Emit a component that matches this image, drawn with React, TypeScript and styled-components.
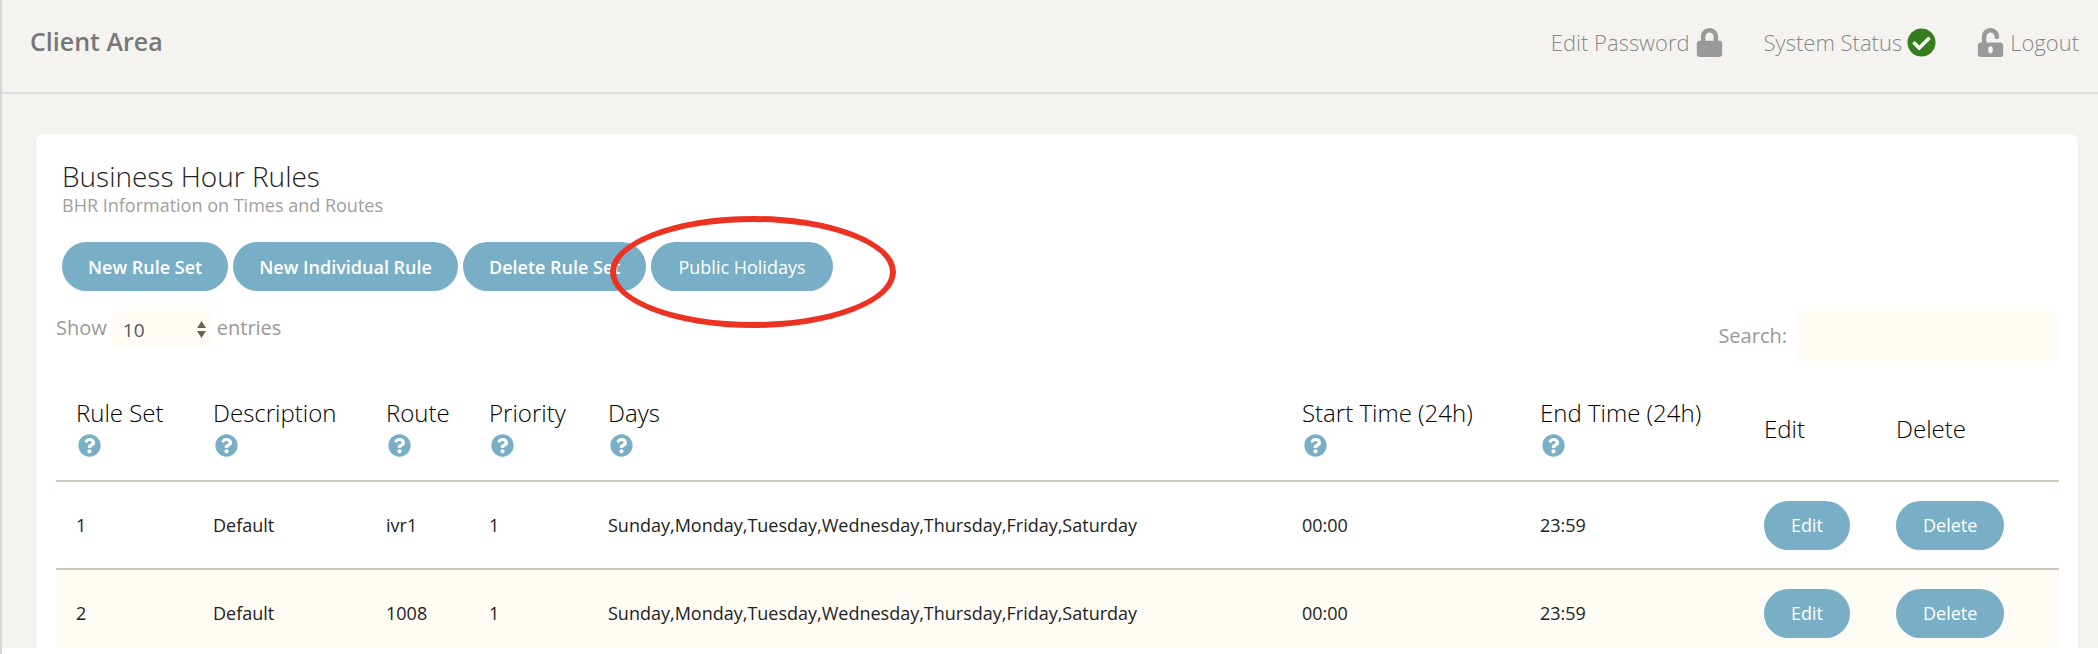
import React from 'react';
import styled, { createGlobalStyle } from 'styled-components';
import { FaCheckCircle, FaLock, FaQuestionCircle, FaUnlockAlt } from 'react-icons/fa';

const GlobalStyle = createGlobalStyle`
  * { box-sizing: border-box; }
  body {
    margin: 0;
    background: #fff;
    color: #222;
    font-family: "Open Sans", "Noto Sans", sans-serif;
    font-size: 18px;
    line-height: 24px;
  }
  button, input, select { font: inherit; }
`;

const Shell = styled.div`
  height: 100vh;
  padding-bottom: 6px;
  border-left: 2px solid #d7d7da;
`;

const Page = styled.div`
  height: 100%;
  overflow: hidden;
  background: #f4f3ef;
`;

const Header = styled.header`
  display: flex;
  align-items: flex-start;
  justify-content: space-between;
  padding: 24px 19px 32px 28px;
  border-bottom: 2px solid #dedede;
`;

const Brand = styled.h1`
  margin: 0;
  color: #777;
  font-size: 25px;
  font-weight: 600;
  line-height: 34px;
`;

const Nav = styled.nav`
  display: flex;
  gap: 40px;
`;

const NavLink = styled.a`
  display: flex;
  align-items: center;
  gap: 5px;
  color: #888;
  font-size: 22px;
  font-weight: 300;
  line-height: 36px;
  text-decoration: none;
`;

const NavIcon = styled.span<{ $color?: string }>`
  display: flex;
  color: ${({ $color }) => $color ?? '#999'};
  font-size: 29px;
`;

const Card = styled.main`
  margin: 40px 20px 0 34px;
  padding: 24px 19px 20px 20px;
  border-radius: 8px;
  background: #fff;
  box-shadow: 0 2px 3px rgba(0, 0, 0, 0.08);
`;

const Intro = styled.div`
  padding-left: 6px;
`;

const Title = styled.h2`
  margin: 0;
  font-size: 28px;
  font-weight: 300;
  line-height: 36px;
`;

const Subtitle = styled.p`
  margin: 0;
  color: #a0a0a0;
  line-height: 22px;
`;

const Actions = styled.div`
  display: flex;
  gap: 5px;
  padding-top: 26px;
`;

const Pill = styled.button<{ $bold?: boolean }>`
  height: 49px;
  padding: 0 ${({ $bold }) => ($bold ? 26 : 27)}px;
  border: 0;
  border-radius: 25px;
  background: #78afc6;
  color: #fff;
  font-size: 18px;
  font-weight: ${({ $bold }) => ($bold ? 600 : 400)};
  white-space: nowrap;
  cursor: pointer;
`;

const Highlighted = styled.div`
  position: relative;
`;

const Ring = styled.span`
  position: absolute;
  top: -26px;
  left: -41px;
  width: 286px;
  height: 112px;
  border: 6px solid #ec3223;
  border-radius: 50%;
  pointer-events: none;
`;

const Controls = styled.div`
  display: flex;
  align-items: flex-start;
  justify-content: space-between;
  padding: 19px 1px 18px 0;
  color: #999;
  font-size: 20px;
`;

const Length = styled.label`
  display: flex;
  align-items: flex-start;
  gap: 6px;
  line-height: 36px;
`;

const SelectBox = styled.span`
  display: flex;
  align-items: center;
  width: 98px;
  border-radius: 6px;
  background: #fffcf6;
`;

const Select = styled.select`
  flex: 1;
  width: 100%;
  height: 39px;
  padding: 0 10px;
  border: 0;
  background: transparent;
  color: #555;
  font-size: 19px;
  appearance: none;
`;

const Carets = styled.svg`
  width: 9px;
  height: 17px;
  margin: 0 5px 0 -14px;
  fill: #66625c;
  pointer-events: none;
`;

const Search = styled.label`
  display: flex;
  align-items: center;
  gap: 9px;
`;

const SearchInput = styled.input`
  width: 262px;
  height: 52px;
  padding: 0 12px;
  border: 0;
  border-radius: 6px;
  background: #fffcf6;
`;

const Table = styled.table`
  width: 100%;
  table-layout: fixed;
  border-collapse: collapse;
`;

const Col = styled.col<{ $width?: number }>`
  width: ${({ $width }) => ($width ? `${$width}px` : 'auto')};
`;

const HeadCell = styled.th`
  height: 101px;
  padding: 0 0 2px 20px;
  border-bottom: 2px solid #cdc7bd;
  color: #000;
  font-size: 24px;
  font-weight: 300;
  line-height: 32px;
  text-align: left;
  white-space: nowrap;
`;

const Help = styled.span`
  display: flex;
  align-items: center;
  height: 32px;
  padding-left: 2px;
  color: #78afc6;
  font-size: 23px;
`;

const Row = styled.tr`
  &:nth-child(even) { background: #fffcf6; }
`;

const Cell = styled.td`
  height: 88px;
  padding: 0 0 0 20px;
  border-bottom: 2px solid #cdc7bd;
`;

const columns = [
  { name: 'Rule Set', width: 137, help: true },
  { name: 'Description', width: 173, help: true },
  { name: 'Route', width: 103, help: true },
  { name: 'Priority', width: 119, help: true },
  { name: 'Days', help: true },
  { name: 'Start Time (24h)', width: 238, help: true },
  { name: 'End Time (24h)', width: 224, help: true },
  { name: 'Edit', width: 132 },
  { name: 'Delete', width: 183 },
];

const allDays = 'Sunday,Monday,Tuesday,Wednesday,Thursday,Friday,Saturday';

const rules = [
  ['1', 'Default', 'ivr1', '1', allDays, '00:00', '23:59'],
  ['2', 'Default', '1008', '1', allDays, '00:00', '23:59'],
];

export default function App() {
  return (
    <Shell>
      <GlobalStyle />
      <Page>
        <Header>
          <Brand>Client Area</Brand>
          <Nav>
            <NavLink href="#password">
              Edit Password
              <NavIcon><FaLock /></NavIcon>
            </NavLink>
            <NavLink href="#status">
              System Status
              <NavIcon $color="#357e20"><FaCheckCircle /></NavIcon>
            </NavLink>
            <NavLink href="#logout">
              <NavIcon><FaUnlockAlt /></NavIcon>
              Logout
            </NavLink>
          </Nav>
        </Header>

        <Card>
          <Intro>
            <Title>Business Hour Rules</Title>
            <Subtitle>BHR Information on Times and Routes</Subtitle>
            <Actions>
              <Pill type="button" $bold>New Rule Set</Pill>
              <Pill type="button" $bold>New Individual Rule</Pill>
              <Pill type="button" $bold>Delete Rule Set</Pill>
              <Highlighted>
                <Pill type="button">Public Holidays</Pill>
                <Ring />
              </Highlighted>
            </Actions>
          </Intro>

          <Controls>
            <Length>
              Show
              <SelectBox>
                <Select defaultValue="10">
                  <option>10</option>
                  <option>25</option>
                  <option>50</option>
                </Select>
                <Carets viewBox="0 0 9 17" aria-hidden="true">
                  <path d="M4.5 0 9 7H0zM4.5 17 0 10h9z" />
                </Carets>
              </SelectBox>
              entries
            </Length>
            <Search>
              Search:
              <SearchInput type="search" />
            </Search>
          </Controls>

          <Table>
            <colgroup>
              {columns.map((c) => <Col key={c.name} $width={c.width} />)}
            </colgroup>
            <thead>
              <tr>
                {columns.map((c) => (
                  <HeadCell key={c.name} scope="col">
                    {c.name}
                    {c.help && <Help><FaQuestionCircle /></Help>}
                  </HeadCell>
                ))}
              </tr>
            </thead>
            <tbody>
              {rules.map((rule) => (
                <Row key={rule[0]}>
                  {rule.map((value, i) => <Cell key={columns[i].name}>{value}</Cell>)}
                  <Cell><Pill type="button">Edit</Pill></Cell>
                  <Cell><Pill type="button">Delete</Pill></Cell>
                </Row>
              ))}
            </tbody>
          </Table>
        </Card>
      </Page>
    </Shell>
  );
}
